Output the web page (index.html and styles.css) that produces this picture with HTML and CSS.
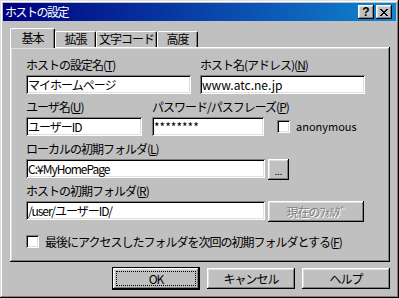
FILE: index.html
```html
<!DOCTYPE html>
<html lang="ja">
<head>
    <meta charset="UTF-8">
    <meta name="viewport" content="width=device-width, initial-scale=1.0">
    <title>ホストの設定</title>
    <link rel="stylesheet" href="styles.css">
</head>
<body>
    <div class="window">
        <div class="titlebar">
            <span class="title">ホストの設定</span>
            <div class="title-buttons">
                <button class="tbtn tbtn-help">?</button>
                <button class="tbtn">
                    <svg width="8" height="7" viewBox="0 0 8 7" shape-rendering="crispEdges">
                        <rect x="0" y="0" width="2" height="1"/><rect x="6" y="0" width="2" height="1"/>
                        <rect x="1" y="1" width="2" height="1"/><rect x="5" y="1" width="2" height="1"/>
                        <rect x="2" y="2" width="4" height="1"/>
                        <rect x="3" y="3" width="2" height="1"/>
                        <rect x="2" y="4" width="4" height="1"/>
                        <rect x="1" y="5" width="2" height="1"/><rect x="5" y="5" width="2" height="1"/>
                        <rect x="0" y="6" width="2" height="1"/><rect x="6" y="6" width="2" height="1"/>
                    </svg>
                </button>
            </div>
        </div>

        <div class="content">
            <div class="tabs">
                <div class="tab tab-basic active">基本</div>
                <div class="tab tab-ext">拡張</div>
                <div class="tab tab-code">文字コード</div>
                <div class="tab tab-adv">高度</div>
            </div>

            <div class="panel">
                <div class="row">
                    <div class="field f-setname">
                        <label>ホストの設定名(<u>T</u>)</label>
                        <input class="edit ja" type="text" value="マイホームページ">
                    </div>
                    <div class="field f-host">
                        <label>ホスト名(アドレス)(<u>N</u>)</label>
                        <input class="edit" type="text" value="www.atc.ne.jp">
                    </div>
                </div>

                <div class="row">
                    <div class="field f-user">
                        <label>ユーザ名(<u>U</u>)</label>
                        <input class="edit ja" type="text" value="ユーザーID">
                    </div>
                    <div class="field f-pass">
                        <label>パスワード/パスフレーズ(<u>P</u>)</label>
                        <input class="edit" type="text" value="********">
                    </div>
                    <label class="check check-anon"><input type="checkbox"><span>anonymous</span></label>
                </div>

                <div class="row">
                    <div class="field">
                        <label>ローカルの初期フォルダ(<u>L</u>)</label>
                        <div class="edit-line">
                            <input class="edit ja f-folder" type="text" value="C:¥MyHomePage">
                            <button class="btn btn-browse">...</button>
                        </div>
                    </div>
                </div>

                <div class="row">
                    <div class="field">
                        <label>ホストの初期フォルダ(<u>R</u>)</label>
                        <div class="edit-line">
                            <input class="edit ja f-folder" type="text" value="/user/ユーザーID/">
                            <button class="btn btn-current" disabled>現在のﾌｫﾙﾀﾞ</button>
                        </div>
                    </div>
                </div>

                <label class="check check-last"><input type="checkbox"><span>最後にアクセスしたフォルダを次回の初期フォルダとする(<u>F</u>)</span></label>
            </div>

            <div class="actions">
                <button class="btn btn-default">OK</button>
                <button class="btn">キャンセル</button>
                <button class="btn">ヘルプ</button>
            </div>
        </div>
    </div>
</body>
</html>
```

FILE: styles.css
```css
* {
    box-sizing: border-box;
}
body {
    margin: 0;
    background: #c0c0c0;
    font-family: "Noto Sans CJK JP", sans-serif;
    font-size: 12px;
    color: #000;
}
.window {
    width: 399px;
    height: 298px;
    padding: 3px;
    background: #c0c0c0;
    box-shadow: inset -1px -1px #000, inset 1px 1px #dfdfdf,
                inset -2px -2px #808080, inset 2px 2px #fff;
}

/* title bar */
.titlebar {
    height: 18px;
    display: flex;
    align-items: center;
    justify-content: space-between;
    padding: 0 4px 0 2px;
    background: linear-gradient(90deg, #000080, #1084d0);
    color: #fff;
}
.title {
    line-height: 14px;
    letter-spacing: -1.5px;
}
.title-buttons {
    display: flex;
    gap: 2px;
}
.tbtn {
    width: 16px;
    height: 14px;
    padding: 0;
    border: 0;
    display: flex;
    align-items: center;
    justify-content: center;
    background: #c0c0c0;
    box-shadow: inset -1px -1px #000, inset 1px 1px #fff,
                inset -2px -2px #808080, inset 2px 2px #dfdfdf;
}
.tbtn-help {
    font: bold 12px "Liberation Sans", sans-serif;
    line-height: 12px;
    color: #000;
}

/* tabs */
.content {
    padding: 7px 6px 0 7px;
}
.tabs {
    display: flex;
    align-items: flex-end;
    height: 19px;
}
.tab {
    height: 16px;
    line-height: 14px;
    text-align: center;
    letter-spacing: -1px;
    background: #c0c0c0;
    border-top: 1px solid #fff;
    border-left: 1px solid #fff;
    border-right: 1px solid #000;
    border-radius: 2px 2px 0 0;
    box-shadow: inset -1px 0 #808080;
}
.tab.active {
    height: 20px;
    margin-bottom: -1px;
    padding-top: 2px;
    position: relative;
    z-index: 1;
}
.tab-basic { width: 45px; }
.tab-ext { width: 41px; }
.tab-code { width: 61px; }
.tab-adv { width: 41px; }

/* panel */
.panel {
    height: 215px;
    padding: 11px 15px 0 16px;
    box-shadow: inset -1px -1px #000, inset 1px 1px #fff,
                inset -2px -2px #808080, inset 2px 2px #dfdfdf;
}
.row {
    display: flex;
    align-items: flex-end;
    margin-bottom: 6px;
}
.field label {
    display: block;
    height: 14px;
    line-height: 14px;
    margin-bottom: 3px;
    letter-spacing: -1px;
    white-space: nowrap;
}
.edit {
    display: block;
    width: 100%;
    height: 19px;
    margin: 0;
    padding: 0 2px;
    border: 0;
    outline: none;
    background: #fff;
    font-family: inherit;
    font-size: 12px;
    color: #000;
    box-shadow: inset 1px 1px #808080, inset -1px -1px #fff,
                inset 2px 2px #000, inset -2px -2px #dfdfdf;
}
.edit.ja {
    letter-spacing: -1px;
}
.f-setname { width: 165px; margin-right: 9px; }
.f-host { width: 165px; }
.f-user { width: 116px; margin-right: 10px; }
.f-pass { width: 112px; }
.edit-line {
    display: flex;
    align-items: flex-start;
    gap: 3px;
    height: 19px;
}
.edit.f-folder {
    width: 239px;
}

/* check boxes */
.check {
    display: flex;
    align-items: center;
    gap: 6px;
    white-space: nowrap;
}
.check input {
    appearance: none;
    -webkit-appearance: none;
    margin: 0;
    width: 13px;
    height: 13px;
    flex-shrink: 0;
    background: #fff;
    box-shadow: inset 1px 1px #808080, inset -1px -1px #fff,
                inset 2px 2px #000, inset -2px -2px #dfdfdf;
}
.check-anon {
    margin-left: 13px;
    margin-bottom: 2px;
    font-size: 11px;
}
.check-last {
    margin-top: 13px;
    letter-spacing: -1px;
}

/* buttons */
.btn {
    height: 21px;
    padding: 0;
    border: 0;
    background: #c0c0c0;
    font-family: inherit;
    font-size: 12px;
    color: #000;
    box-shadow: inset -1px -1px #000, inset 1px 1px #fff,
                inset -2px -2px #808080, inset 2px 2px #dfdfdf;
}
.btn-browse {
    width: 21px;
    font-size: 9px;
    padding-top: 3px;
}
.btn-current {
    width: 96px;
    color: #808080;
    text-shadow: 1px 1px #fff;
    letter-spacing: -1px;
}
.actions {
    display: flex;
    justify-content: flex-end;
    align-items: center;
    gap: 7px;
    margin-top: 5px;
}
.actions .btn {
    width: 88px;
    letter-spacing: -1px;
}
.actions .btn-default {
    height: 23px;
    border: 1px solid #000;
    outline: 1px dotted #000;
    outline-offset: -5px;
}
```
